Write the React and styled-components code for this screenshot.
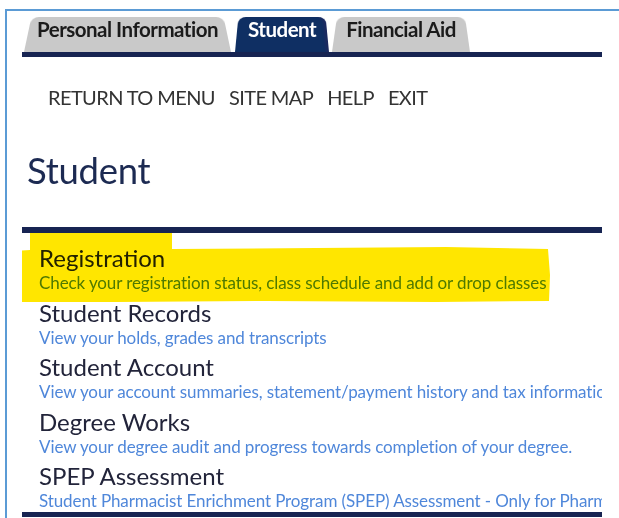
import React from 'react';
import styled, { createGlobalStyle } from 'styled-components';

const GlobalStyle = createGlobalStyle`
    html, body {
        margin: 0;
        padding: 0;
        background: #fff;
        overflow: hidden;
    }
    body {
        font-family: Lato, "Open Sans", "Liberation Sans", sans-serif;
    }
`;

const Frame = styled.div`
    margin: 9px 0 0 5px;
    height: 509px;
    border-top: 2px solid #5b9bd5;
    border-left: 2px solid #5b9bd5;
    padding: 3px 17px 0 15px;
    box-sizing: border-box;
`;

const TabBar = styled.div`
    display: flex;
    align-items: flex-end;
    height: 38px;
    padding-left: 2px;
    border-bottom: 5px solid #172452;
`;

const Tab = styled.div`
    position: relative;
    z-index: ${p => (p.$active ? 2 : 1)};
    height: 38px;
    box-sizing: border-box;
    margin-right: ${p => p.$gap}px;
    padding: 0 ${p => p.$pad}px 9px;
    display: flex;
    align-items: center;
    font-size: 20.5px;
    font-weight: 700;
    letter-spacing: -0.5px;
    color: ${p => (p.$active ? '#fff' : '#1b1b1b')};

    &::before {
        content: '';
        position: absolute;
        inset: 0;
        z-index: -1;
        background: ${p => (p.$active ? '#0f2f63' : '#c9c9c9')};
        box-shadow: ${p => (p.$active ? 'inset -5px 0 3px -2px #1d2a60' : 'none')};
        border-radius: 8px 8px 0 0;
        transform: perspective(60px) rotateX(7deg);
        transform-origin: bottom;
    }
`;

const NavLinks = styled.nav`
    display: flex;
    gap: 14px;
    padding: 28px 0 0 26px;
    height: 34px;
`;

const NavLink = styled.a`
    font-size: 20px;
    letter-spacing: -0.6px;
    color: #333;
    text-decoration: none;
`;

const Heading = styled.h1`
    margin: 25px 0 0 5px;
    font-size: 36.5px;
    font-weight: 400;
    color: #1c2a52;
    letter-spacing: -0.3px;
    height: 52px;
    line-height: 52px;
`;

const MenuPanel = styled.div`
    position: relative;
    margin-top: 31px;
    border-top: 6px solid #172452;
    border-bottom: 5px solid #172452;
    padding: 11px 0 0 17px;
    display: flex;
    flex-direction: column;
    gap: 4.5px;
    white-space: nowrap;
    overflow: hidden;
`;

const Marker = styled.svg`
    position: absolute;
    left: -6px;
    top: -6px;
    mix-blend-mode: multiply;
    pointer-events: none;
`;

const MenuItem = styled.div`
    height: 50px;
`;

const ItemTitle = styled.a`
    display: block;
    font-size: 24px;
    line-height: 28px;
    color: #22243a;
    text-decoration: none;
`;

const ItemDesc = styled.div`
    font-size: 17px;
    line-height: 22px;
    color: #4f87da;
    letter-spacing: -0.1px;
`;

const tabs = [
    { label: 'Personal Information', pad: 13, gap: 4 },
    { label: 'Student', pad: 13, gap: 3, active: true },
    { label: 'Financial Aid', pad: 14, gap: 0 },
];

const links = ['RETURN TO MENU', 'SITE MAP', 'HELP', 'EXIT'];

const items = [
    { title: 'Registration', desc: 'Check your registration status, class schedule and add or drop classes' },
    { title: 'Student Records', desc: 'View your holds, grades and transcripts' },
    { title: 'Student Account', desc: 'View your account summaries, statement/payment history and tax information' },
    { title: 'Degree Works', desc: 'View your degree audit and progress towards completion of your degree.' },
    { title: 'SPEP Assessment', desc: 'Student Pharmacist Enrichment Program (SPEP) Assessment - Only for Pharmacy students' },
];

const App = () => {
    return (
        <>
            <GlobalStyle />
            <Frame>
                <TabBar>
                    {tabs.map(t => (
                        <Tab key={t.label} $active={t.active} $pad={t.pad} $gap={t.gap}>
                            {t.label}
                        </Tab>
                    ))}
                </TabBar>
                <NavLinks>
                    {links.map(l => (
                        <NavLink key={l} href="#">{l}</NavLink>
                    ))}
                </NavLinks>
                <Heading>Student</Heading>
                <MenuPanel>
                    {items.map(i => (
                        <MenuItem key={i.title}>
                            <ItemTitle href="#">{i.title}</ItemTitle>
                            <ItemDesc>{i.desc}</ItemDesc>
                        </MenuItem>
                    ))}
                    {/* yellow marker stroke over the first entry */}
                    <Marker width="545" height="80" viewBox="0 0 545 80">
                        <path
                            d="M14 0 L150 -1 L156 1 L156 22 L300 21 L430 20 L532 22 L534 48 L533 74 L420 75 L250 74 L100 75 L1 75 L0 50 L1 24 L14 23 Z"
                            fill="#ffe600"
                        />
                    </Marker>
                </MenuPanel>
            </Frame>
        </>
    );
};

export default App;
